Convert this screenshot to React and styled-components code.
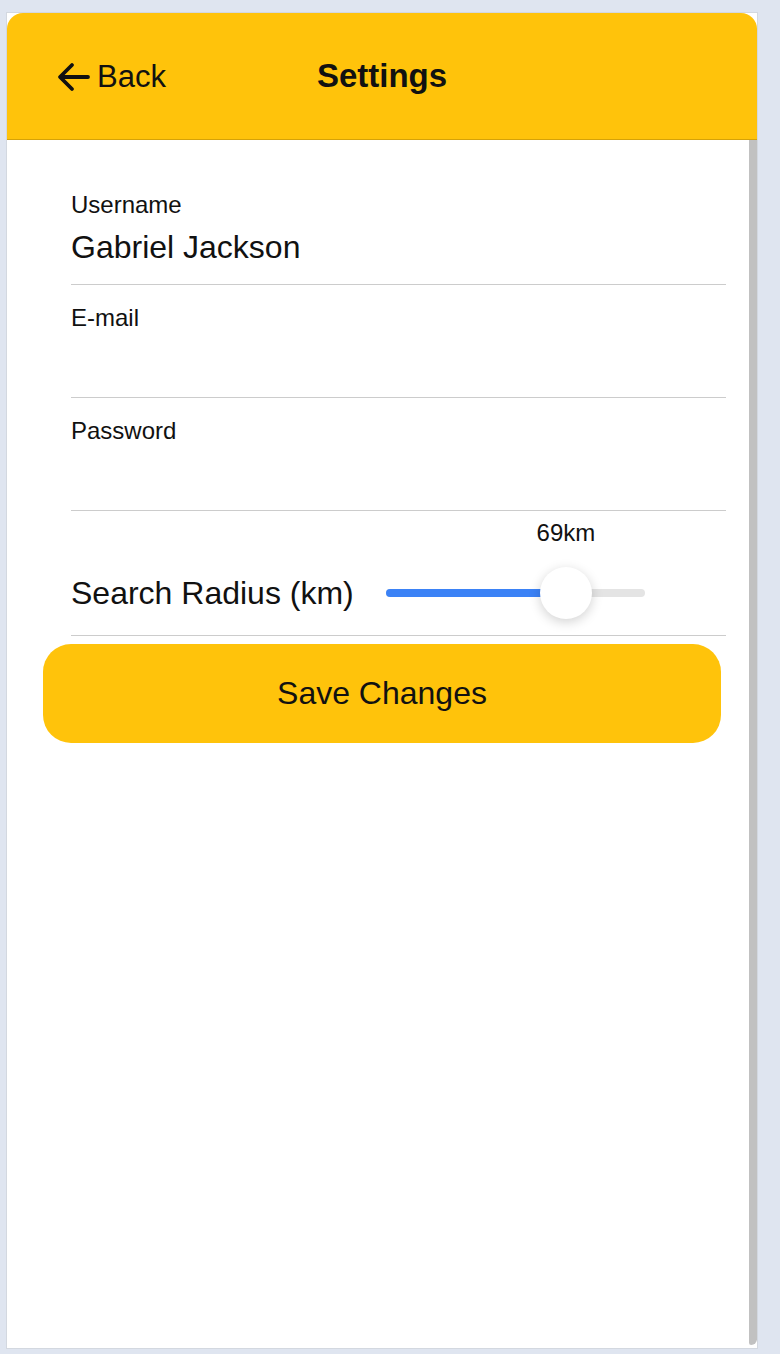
import React, { useState } from 'react'
import styled, { createGlobalStyle } from 'styled-components'

const GlobalStyle = createGlobalStyle`
  html, body {
    margin: 0;
    padding: 0;
    background: #dfe5f0;
    font-family: "Liberation Sans", Arial, sans-serif;
    color: #111;
  }
  * {
    box-sizing: border-box;
  }
`

const Frame = styled.div`
  width: 752px;
  height: 1337px;
  margin: 12px 22px 5px 6px;
  background: #fff;
  border: 1px solid #d3d8e0;
  display: flex;
  flex-direction: column;
`

const Header = styled.header`
  height: 127px;
  background: #ffc30b;
  border-radius: 16px 16px 0 0;
  border-bottom: 1px solid #d5a208;
  display: grid;
  grid-template-columns: 1fr auto 1fr;
  align-items: center;
`

const BackButton = styled.button`
  justify-self: start;
  display: flex;
  align-items: center;
  gap: 6px;
  margin: 2px 0 0 50px;
  padding: 0;
  border: none;
  background: transparent;
  font-family: inherit;
  font-size: 31px;
  color: #111;
  cursor: pointer;
`

const Title = styled.h1`
  margin: 0;
  font-size: 33px;
  font-weight: bold;
  color: #111;
`

const Body = styled.div`
  flex: 1;
  display: flex;
  min-height: 0;
`

const Content = styled.main`
  flex: 1;
  background: #fff;
`

const Scrollbar = styled.div`
  width: 8px;
  margin-bottom: 3px;
  background: #c1c1c1;
  border-radius: 0 0 8px 3px;
`

const Form = styled.div`
  padding: 32px 23px 0 64px;
`

const Field = styled.div`
  padding-top: 19px;
  border-bottom: 1px solid #cccccc;
`

const Label = styled.label`
  display: block;
  font-size: 24px;
  line-height: 28px;
`

const Input = styled.input`
  display: block;
  width: 100%;
  height: 65px;
  margin: 0;
  padding: 10px 0 18px;
  border: none;
  outline: none;
  background: transparent;
  font-family: inherit;
  font-size: 32px;
  line-height: 37px;
  color: #111;
`

const SliderField = styled.div`
  display: grid;
  grid-template-columns: max-content 259px;
  grid-template-rows: 28px 88px;
  justify-content: start;
  column-gap: 32px;
  padding-top: 8px;
  border-bottom: 1px solid #cccccc;
`

const RadiusValue = styled.div`
  grid-column: 2;
  grid-row: 1;
  position: relative;
  font-size: 24px;
  line-height: 28px;
`

const RadiusLabel = styled.div`
  grid-column: 1;
  grid-row: 2;
  align-self: center;
  font-size: 32px;
  padding-top: 4px;
`

const Track = styled.div`
  grid-column: 2;
  grid-row: 2;
  align-self: center;
  margin-top: 3px;
  position: relative;
  height: 8px;
  border-radius: 4px;
  background: #e4e4e4;
`

const Fill = styled.div`
  height: 100%;
  border-radius: 4px;
  background: #3b82f6;
`

const Thumb = styled.div`
  position: absolute;
  top: 50%;
  width: 52px;
  height: 52px;
  margin: -26px 0 0 -26px;
  border-radius: 50%;
  background: #fff;
  box-shadow: 0 3px 12px rgba(0, 0, 0, 0.18);
`

const Bubble = styled.span`
  position: absolute;
  top: 0;
  transform: translateX(-50%);
  white-space: nowrap;
`

const SaveButton = styled.button`
  display: block;
  width: 678px;
  height: 99px;
  margin: 8px 0 0 36px;
  border: none;
  border-radius: 28px;
  background: #ffc30b;
  font-family: inherit;
  font-size: 32px;
  color: #111;
  cursor: pointer;
`

function ArrowLeft() {
  return (
    <svg width="34" height="32" viewBox="0 0 34 32" fill="none">
      <path
        d="M31 16H4M15 4L3 16l12 12"
        stroke="#111"
        strokeWidth="3.8"
        strokeLinecap="round"
        strokeLinejoin="round"
      />
    </svg>
  )
}

const TRACK = 259
const MIN = 1
const MAX = 100

export default function App() {
  const [radius] = useState(69)
  const pos = 26 + ((radius - MIN) / (MAX - MIN)) * (TRACK - 52) + 12

  return (
    <>
      <GlobalStyle />
      <Frame>
        <Header>
          <BackButton>
            <ArrowLeft />
            Back
          </BackButton>
          <Title>Settings</Title>
        </Header>
        <Body>
          <Content>
            <Form>
              <Field>
                <Label>Username</Label>
                <Input defaultValue="Gabriel Jackson" />
              </Field>
              <Field>
                <Label>E-mail</Label>
                <Input type="email" />
              </Field>
              <Field>
                <Label>Password</Label>
                <Input type="password" />
              </Field>
              <SliderField>
                <RadiusValue>
                  <Bubble style={{ left: pos }}>{radius}km</Bubble>
                </RadiusValue>
                <RadiusLabel>Search Radius (km)</RadiusLabel>
                <Track>
                  <Fill style={{ width: pos }} />
                  <Thumb style={{ left: pos }} />
                </Track>
              </SliderField>
            </Form>
            <SaveButton>Save Changes</SaveButton>
          </Content>
          <Scrollbar />
        </Body>
      </Frame>
    </>
  )
}
